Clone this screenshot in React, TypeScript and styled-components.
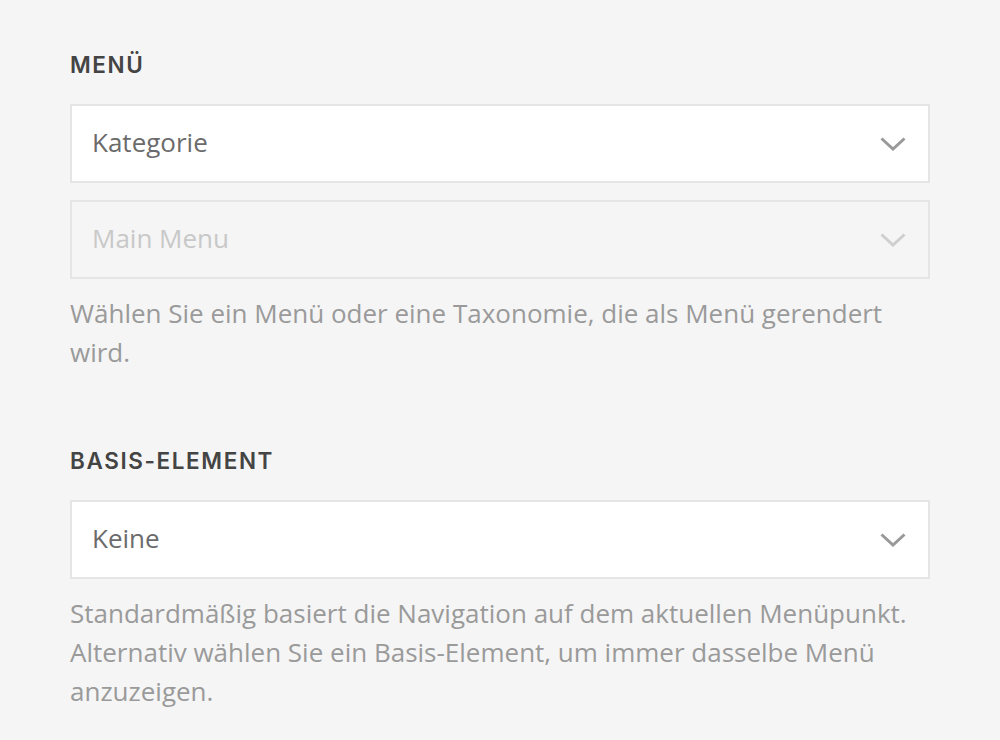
import styled, { createGlobalStyle } from "styled-components";

const GlobalStyle = createGlobalStyle`
  html, body {
    margin: 0;
    padding: 0;
    background: #f5f5f5;
  }
  body {
    font-family: "Open Sans", "Liberation Sans", sans-serif;
  }
`;

const Page = styled.div`
  padding: 50px 70px 30px;
  display: flex;
  flex-direction: column;
  gap: 74px;
`;

const Field = styled.section`
  display: flex;
  flex-direction: column;
`;

const Label = styled.h3`
  margin: 0 0 24px;
  font-family: "Inter", "Lato", sans-serif;
  font-size: 22.5px;
  font-weight: 600;
  line-height: 30px;
  letter-spacing: 1.6px;
  color: #444;
  text-transform: uppercase;
`;

const Select = styled.div<{ $disabled?: boolean }>`
  height: 79px;
  box-sizing: border-box;
  display: flex;
  align-items: center;
  justify-content: space-between;
  padding: 0 22px 3px 20px;
  border: 2px solid #e5e5e5;
  background: ${(p) => (p.$disabled ? "#f5f5f5" : "#fff")};
  color: ${(p) => (p.$disabled ? "#c8c8c8" : "#6b6b6b")};
  font-size: 26px;
  cursor: ${(p) => (p.$disabled ? "default" : "pointer")};

  & + & {
    margin-top: 17px;
  }
`;

const Chevron = styled.svg<{ $disabled?: boolean }>`
  width: 26px;
  height: 14px;
  margin-top: 3px;
  stroke: ${(p) => (p.$disabled ? "#cfcfcf" : "#999")};
  fill: none;
  stroke-width: 3;
  flex-shrink: 0;
`;

const Help = styled.p`
  margin: 15px 0 0;
  font-size: 26px;
  line-height: 39px;
  color: #9a9a9a;
`;

const SelectBox = ({ value, disabled }: { value: string; disabled?: boolean }) => (
  <Select $disabled={disabled}>
    <span>{value}</span>
    <Chevron $disabled={disabled} viewBox="0 0 26 14">
      <polyline points="1.5,1.5 13,12 24.5,1.5" />
    </Chevron>
  </Select>
);

export default function App() {
  return (
    <>
      <GlobalStyle />
      <Page>
        <Field>
          <Label>Menü</Label>
          <SelectBox value="Kategorie" />
          <SelectBox value="Main Menu" disabled />
          <Help>Wählen Sie ein Menü oder eine Taxonomie, die als Menü gerendert wird.</Help>
        </Field>
        <Field>
          <Label>Basis-Element</Label>
          <SelectBox value="Keine" />
          <Help>
            Standardmäßig basiert die Navigation auf dem aktuellen Menüpunkt. Alternativ wählen Sie
            ein Basis-Element, um immer dasselbe Menü anzuzeigen.
          </Help>
        </Field>
      </Page>
    </>
  );
}
